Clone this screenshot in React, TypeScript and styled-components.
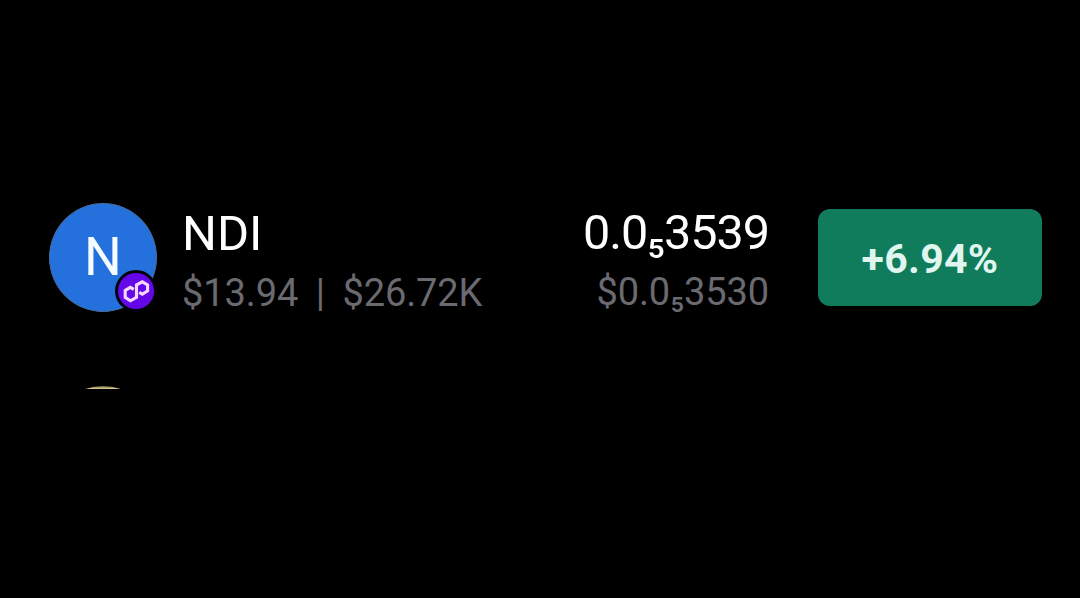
import React from "react";
import styled, { createGlobalStyle } from "styled-components";

const GlobalStyle = createGlobalStyle`
  body {
    margin: 0;
    background: #000;
    font-family: Roboto, "Liberation Sans", sans-serif;
  }
`;

const Screen = styled.main`
  box-sizing: border-box;
  height: 598px;
  padding: 203px 38px 0 49px;
  overflow: hidden;
  background: #000;
`;

const Row = styled.div`
  display: flex;
  height: 109px;
`;

const Avatar = styled.div`
  position: relative;
  display: flex;
  flex-shrink: 0;
  align-items: center;
  justify-content: center;
  box-sizing: border-box;
  width: 108px;
  height: 109px;
  padding-bottom: 2px;
  border: 1px solid #4a6c9c;
  border-radius: 50%;
  background: #2470dc;
  color: #f4fcff;
  font-size: 53px;
`;

const ChainBadge = styled.span`
  position: absolute;
  right: -1px;
  bottom: -1px;
  box-sizing: border-box;
  width: 42px;
  height: 42px;
  border: 3px solid #04020c;
  border-radius: 50%;
  background: #6408ea;
  color: #f6d8ff;

  svg {
    display: block;
  }
`;

const Column = styled.div<{ $end?: boolean }>`
  display: flex;
  flex-direction: column;
  align-items: ${(p) => (p.$end ? "flex-end" : "flex-start")};
  margin-left: ${(p) => (p.$end ? "auto" : "25px")};
  padding-top: ${(p) => (p.$end ? 0 : "1px")};
  white-space: nowrap;
`;

const Title = styled.div<{ $tight?: boolean }>`
  color: #fff;
  font-size: ${(p) => (p.$tight ? "48.5px" : "49px")};
  letter-spacing: ${(p) => (p.$tight ? "-1px" : "normal")};
  line-height: 60px;
`;

const Detail = styled.div`
  display: flex;
  gap: 17.5px;
  color: #6a6a70;
  font-size: 38px;
  letter-spacing: -0.1px;
  line-height: 58px;
`;

const Change = styled.div`
  display: flex;
  align-items: center;
  justify-content: center;
  box-sizing: border-box;
  width: 224px;
  height: 97px;
  margin: 6px 0 0 49px;
  padding-top: 3px;
  border-radius: 12px;
  background: #107c5b;
  color: #dff5ee;
  font-size: 41px;
  font-weight: 700;
  letter-spacing: 0.3px;
`;

const NextRow = styled.div`
  width: 108px;
  height: 3px;
  margin-top: 74px;
  overflow: hidden;
`;

const NextAvatar = styled.div`
  width: 108px;
  height: 108px;
  border-radius: 50%;
  background: linear-gradient(#6b603c 0, #e4d8a0 3px);
`;

const PolygonIcon = () => (
  <svg width="36" height="36" viewBox="3 3 36 36" fill="none">
    <path
      d="M18.8 19.4 15.4 17.4 10.2 20.5V27.4L15.4 30.8 21.5 27.4V15L27.3 11.8 32.6 14.8V20.9L27.3 24.2 24.2 22.4"
      stroke="currentColor"
      strokeWidth="3.1"
    />
  </svg>
);

const App = () => {
  return (
    <Screen>
      <GlobalStyle />
      <Row>
        <Avatar>
          N
          <ChainBadge>
            <PolygonIcon />
          </ChainBadge>
        </Avatar>
        <Column>
          <Title>NDI</Title>
          <Detail>
            <span>$13.94</span>
            <span>|</span>
            <span>$26.72K</span>
          </Detail>
        </Column>
        <Column $end>
          <Title $tight>0.0₅3539</Title>
          <Detail>$0.0₅3530</Detail>
        </Column>
        <Change>+6.94%</Change>
      </Row>
      <NextRow>
        <NextAvatar />
      </NextRow>
    </Screen>
  );
};

export default App;
